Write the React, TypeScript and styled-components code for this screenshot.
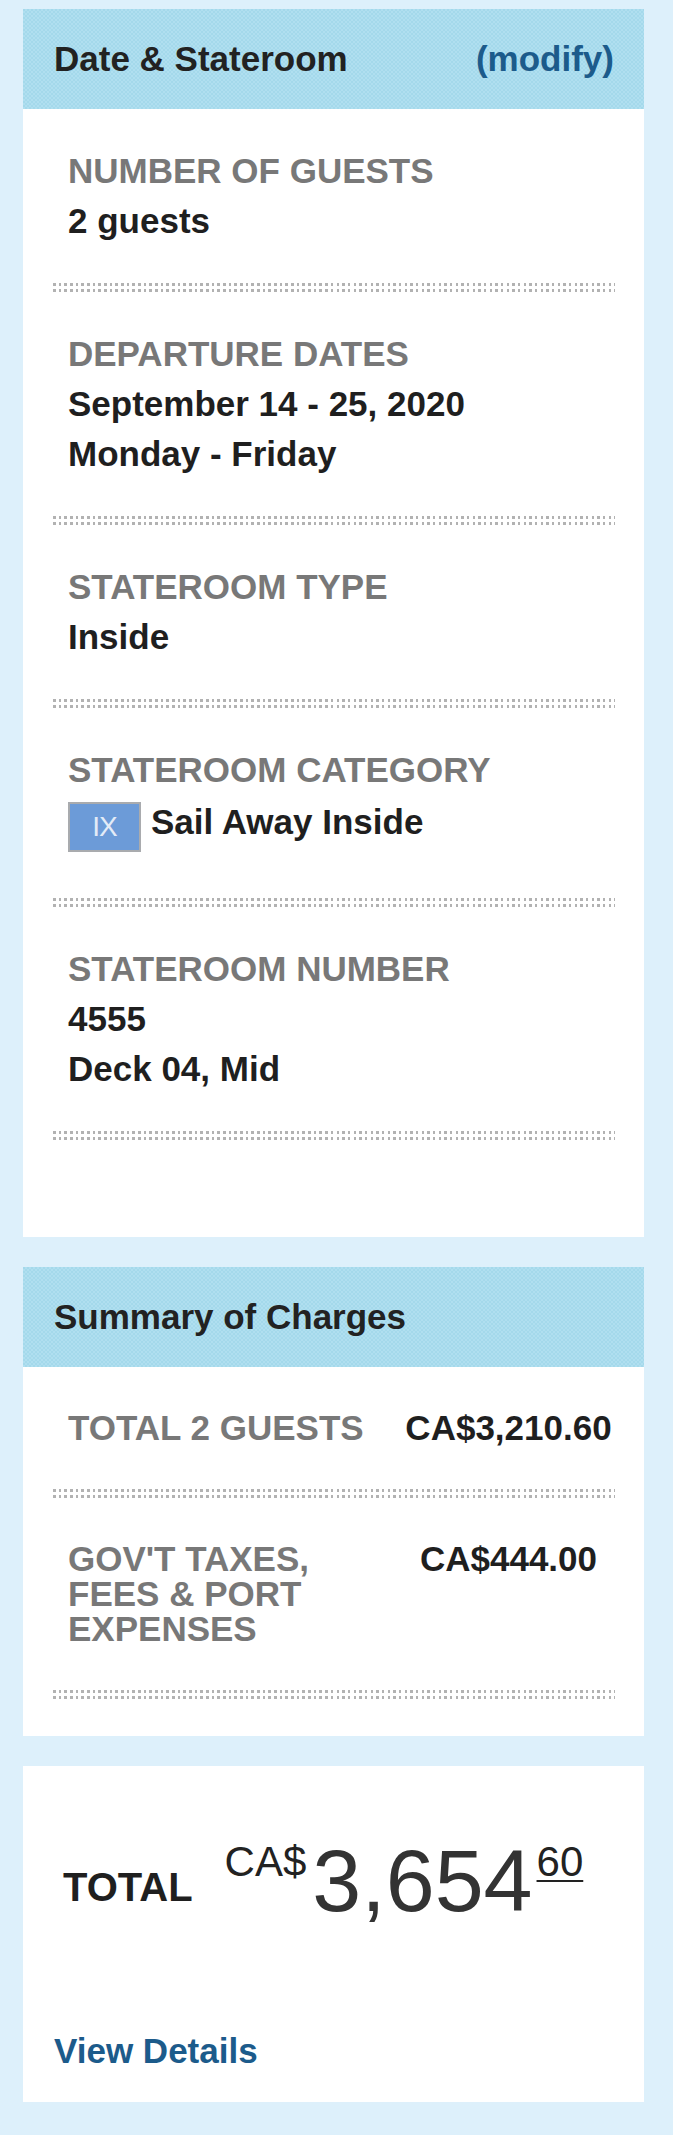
import React from "react";
import styled, { createGlobalStyle } from "styled-components";

const GlobalStyle = createGlobalStyle`
	body {
		margin: 0;
		background: #ffffff;
		font-family: "Liberation Sans", Arial, Helvetica, sans-serif;
	}
	* {
		box-sizing: border-box;
	}
`;

interface Detail {
	label: string;
	lines: string[];
}

const details: Detail[] = [
	{ label: "Number of guests", lines: ["2 guests"] },
	{ label: "Departure dates", lines: ["September 14 - 25, 2020", "Monday - Friday"] },
	{ label: "Stateroom type", lines: ["Inside"] },
];

const charges = [
	{ label: "Total 2 guests", amount: "CA$3,210.60" },
	{ label: "Gov't taxes, fees & port expenses", amount: "CA$444.00" },
];

export default function App() {
	return (
		<>
			<GlobalStyle />
			<Page>
				<Card $padBottom={97}>
					<CardHeader>
						<HeaderTitle>Date &amp; Stateroom</HeaderTitle>
						<ModifyLink href="#">(modify)</ModifyLink>
					</CardHeader>

					{details.map((d) => (
						<React.Fragment key={d.label}>
							<Item>
								<Label>{d.label}</Label>
								{d.lines.map((line) => (
									<Value key={line}>{line}</Value>
								))}
							</Item>
							<Divider />
						</React.Fragment>
					))}

					<Item>
						<Label>Stateroom category</Label>
						<CategoryRow>
							<Badge>IX</Badge>
							<Value>Sail Away Inside</Value>
						</CategoryRow>
					</Item>
					<Divider />

					<Item>
						<Label>Stateroom number</Label>
						<Value>4555</Value>
						<Value>Deck 04, Mid</Value>
					</Item>
					<Divider />
				</Card>

				<Card $padBottom={37}>
					<CardHeader>
						<HeaderTitle>Summary of Charges</HeaderTitle>
					</CardHeader>
					{charges.map((c) => (
						<React.Fragment key={c.label}>
							<ChargeRow>
								<ChargeLabel>{c.label}</ChargeLabel>
								<ChargeValue>{c.amount}</ChargeValue>
							</ChargeRow>
							<Divider />
						</React.Fragment>
					))}
				</Card>

				<TotalCard $padBottom={26}>
					<TotalRow>
						<TotalLabel>Total</TotalLabel>
						<Price>
							<Currency>CA$</Currency>
							<Whole>3,654</Whole>
							<Cents>60</Cents>
						</Price>
					</TotalRow>
					<DetailsLink href="#">View Details</DetailsLink>
				</TotalCard>
			</Page>
		</>
	);
}

const Page = styled.main`
	width: 673px;
	min-height: 2135px;
	padding: 9px 29px 33px 23px;
	background: #ddf0fb;
	display: flex;
	flex-direction: column;
	gap: 30px;
`;

const Card = styled.section<{ $padBottom: number }>`
	background: #ffffff;
	width: 621px;
	padding-bottom: ${({ $padBottom }) => $padBottom}px;
	display: flex;
	flex-direction: column;
`;

const TotalCard = styled(Card)`
	padding-top: 71px;
`;

const CardHeader = styled.header`
	height: 100px;
	padding: 0 30px 0 31px;
	display: flex;
	align-items: center;
	justify-content: space-between;
	background-color: #a4d9eb;
	background-image: conic-gradient(#b0dff0 25%, transparent 0 50%, #b0dff0 0 75%, transparent 0);
	background-size: 4px 4px;
`;

const HeaderTitle = styled.h2`
	margin: 0;
	font-size: 35px;
	line-height: 50px;
	font-weight: 700;
	color: #222222;
`;

const ModifyLink = styled.a`
	font-size: 35px;
	line-height: 50px;
	font-weight: 700;
	color: #1c5b8b;
	text-decoration: none;
`;

const Item = styled.div`
	padding: 37px 0 37px 45px;
`;

const Label = styled.div`
	font-size: 35px;
	line-height: 50px;
	font-weight: 700;
	color: #787878;
	text-transform: uppercase;
`;

const Value = styled.div`
	font-size: 35px;
	line-height: 50px;
	font-weight: 700;
	color: #1f1f1f;
`;

const CategoryRow = styled.div`
	display: flex;
	align-items: flex-start;
	gap: 10px;
	margin: 7px 0 9px;

	${Value} {
		line-height: 40px;
	}
`;

const Badge = styled.span`
	width: 73px;
	height: 50px;
	display: flex;
	align-items: center;
	justify-content: center;
	background: #6c9bd8;
	border: 2px solid #a9abae;
	color: #e3ebf7;
	font-size: 28px;
	font-weight: 400;
	letter-spacing: -1px;
`;

const Divider = styled.hr`
	margin: 0 29px 0 30px;
	height: 9px;
	border: 0;
	background-image:
		repeating-linear-gradient(90deg, #b2b2b2 0 2.5px, transparent 2.5px 5.67px),
		repeating-linear-gradient(90deg, #b2b2b2 0 2.5px, transparent 2.5px 5.67px);
	background-size: 100% 3px;
	background-position: 0 0, 0 6px;
	background-repeat: no-repeat;
`;

const ChargeRow = styled.div`
	display: grid;
	grid-template-columns: 305px 1fr;
	padding: 43px 0 44px 45px;
`;

const ChargeLabel = styled.div`
	font-size: 35px;
	line-height: 35px;
	font-weight: 700;
	color: #787878;
	text-transform: uppercase;
`;

const ChargeValue = styled.div`
	font-size: 35px;
	line-height: 35px;
	font-weight: 700;
	color: #1f1f1f;
	text-align: center;
`;

const TotalRow = styled.div`
	display: flex;
	align-items: flex-start;
	gap: 32px;
	padding-left: 40px;
`;

const TotalLabel = styled.div`
	margin-top: 30px;
	font-size: 40px;
	line-height: 40px;
	font-weight: 700;
	color: #1f1f1f;
	text-transform: uppercase;
`;

const Price = styled.div`
	display: flex;
	align-items: flex-start;
	color: #333333;
`;

const Currency = styled.span`
	margin-top: 4px;
	font-size: 42px;
	line-height: 42px;
	color: #222222;
`;

const Whole = styled.span`
	margin-left: 6px;
	font-size: 88px;
	line-height: 88px;
`;

const Cents = styled.span`
	margin: 4px 0 0 4px;
	font-size: 42px;
	line-height: 42px;
	color: #222222;
	text-decoration: underline;
	text-underline-offset: 4px;
	text-decoration-thickness: 2px;
`;

const DetailsLink = styled.a`
	margin: 101px 0 0 31px;
	font-size: 35px;
	line-height: 50px;
	font-weight: 700;
	color: #1c5b8b;
	text-decoration: none;
	align-self: flex-start;
`;
